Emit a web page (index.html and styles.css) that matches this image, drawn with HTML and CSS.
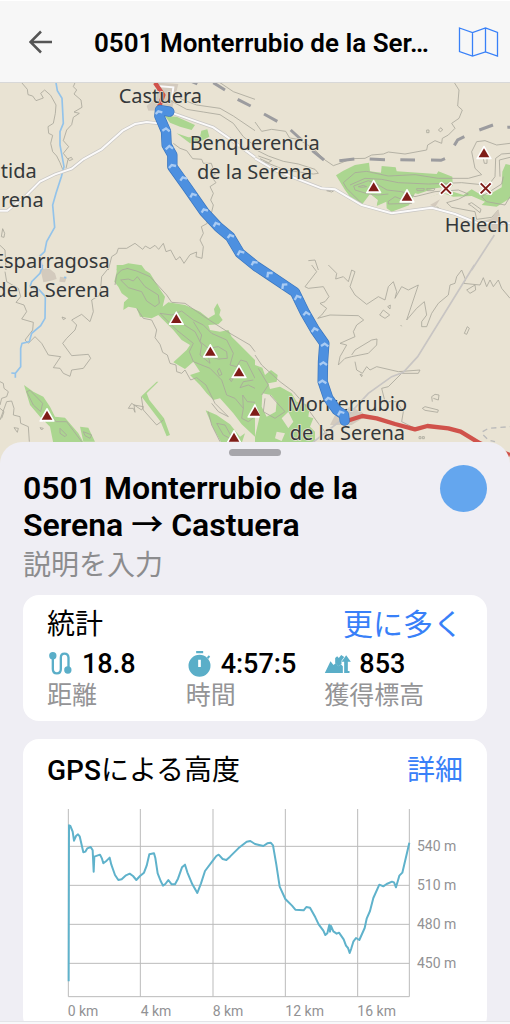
FILE: index.html
```html
<!DOCTYPE html>
<html lang="ja">
<head>
    <meta charset="UTF-8">
    <meta name="viewport" content="width=device-width, initial-scale=1">
    <title>0501 Monterrubio de la Serena → Castuera</title>
    <link rel="stylesheet" href="styles.css">
</head>
<body>

<header class="header">
    <button class="icon-btn" type="button" aria-label="戻る">
        <svg class="back-icon" viewBox="0 0 24 24"><path d="M23 12H2M12 1.500L1.500 12L12 22.500"/></svg>
    </button>
    <h1 class="header-title">0501 Monterrubio de la Ser…</h1>
    <button class="icon-btn" type="button" aria-label="地図">
        <svg class="map-icon" viewBox="0 0 40 30"><path d="M1 1L14 5.500L27 1L39 5.500V29L27 25L14 29L1 24.500ZM14 5.500V29M27 1V25"/></svg>
    </button>
</header>

<svg class="map" viewBox="0 249 1530 1140" preserveAspectRatio="xMidYMin slice" role="img" aria-label="ルート地図">
    <defs>
        <g id="peak"><path d="M0 -19L21 18H-21Z" fill="#fff" stroke="#fff" stroke-width="4" stroke-linejoin="round"/><path d="M0 -13L16 14H-16Z" fill="#7f1d18"/></g>
        <g id="pass"><path d="M-14 -14L14 14M14 -14L-14 14" stroke="#fff" stroke-width="13" stroke-linecap="round"/><path d="M-15 -15L15 15M15 -15L-15 15" stroke="#7f1d18" stroke-width="6"/></g>
    </defs>

    <!-- north west -->
    <g transform="translate(0 240)">
        <path class="town" d="M470 8L535 12L515 90L445 92L440 78L470 50Z"/>
        <path class="wood" d="M495 108L530 110L585 135L575 150L540 140L510 128ZM530 160L565 172L600 170L604 152L622 148L628 170L600 185L570 190ZM350 570L352 560L385 550L425 556L435 570Z"/>
        <path class="contour" d="M65 8L82 28L84 44L98 48L108 62L130 54L122 40L134 30L152 46L168 75L166 100L160 130L144 140L146 160L158 166L152 190L158 215L170 228L180 248L188 268M225 8L220 20L230 30L222 42L243 60L246 82L222 96L238 100L220 112L215 134L200 150L190 182L206 200L190 220L204 238L198 265M204 236L214 232L218 238L208 242ZM520 36L545 58L590 75L660 85L700 108L765 152M512 62L560 88L610 96L660 104L700 130L730 170L765 198M520 190L540 205L560 212L578 236L605 238L610 250L634 250L638 262L630 270L650 280L634 290L648 308L630 320L640 340L632 360L640 375L634 400L618 410L622 430L604 440L610 460L600 480L610 500L606 535L588 530L590 516L570 524L552 550L540 530L528 540L512 510L498 515L490 490L476 508L465 496L450 506L436 498L428 508L405 490L380 505L355 505L350 520L335 530L325 570M660 8L700 35L765 58M8 446L4 470L12 472L14 460L8 446M0 496L15 510L18 570"/>
        <path class="river" d="M168 8L172 32L186 55L190 130L180 155L180 195L192 260L184 290L168 340L158 375L164 442L140 485L134 515L120 528L128 570"/>
        <path class="road-edge" d="M0 392L22 392L80 345L120 305L165 283L215 266L250 238L305 208L368 152L405 132L440 126L475 130M520 100L590 125L640 142L680 170L765 232"/>
        <path class="road" d="M0 392L22 392L80 345L120 305L165 283L215 266L250 238L305 208L368 152L405 132L440 126L475 130M520 100L590 125L640 142L680 170L765 232M470 18L520 22L515 60"/>
        <path class="rail" d="M565 0L592 12M640 8L675 30M713 58L752 78"/>
        <path class="red-road" d="M465 8L490 45L474 90"/>
    </g>

    <!-- north east -->
    <g transform="translate(765 240)">
        <path class="wood" d="M243 286L265 272L300 255L342 248L345 274L378 278L380 258L422 262L425 274L545 282L550 274L592 290L594 335L625 345L650 328L670 340L700 345L740 322L742 275L752 252L765 255V355L725 380L680 375L690 365L650 348L595 350L560 338L525 350L480 340L462 376L410 395L395 385L394 365L365 378L368 360L345 342L320 375L285 350L270 330Z"/>
        <path class="ground" d="M330 372L345 342L368 360L362 384L376 374L388 384L372 392ZM480 345L540 325L594 318V345L560 338L525 352ZM600 320L660 312L735 290L730 322L700 340L650 325Z"/>
        <path class="contour" d="M0 126L20 154L50 148L92 154L104 174L130 178L175 205L210 240L235 257L255 250L290 236L330 235L350 225L385 222L400 216L450 222L515 210L518 195L540 182L560 190L562 175L580 165L600 145L590 130L612 115L622 90L608 78L612 30L598 8M515 150L522 150L522 158L515 158ZM550 150L558 143L563 150L556 155ZM0 208L40 228L85 244L130 252L180 268L190 280L175 282L90 270L40 250L0 238M10 228L50 242L40 248L15 236M265 308L300 278L335 274L400 288L480 284L550 295L640 295L680 284L660 265L650 215L665 185L690 182L725 195L765 190M285 315L330 295L380 298L430 308L520 312L620 308L700 316L720 290L722 235L740 222L765 220M296 318L340 302L362 310L396 330L440 335L480 350L540 335L610 330L640 342L610 358L575 368L590 382L660 395L665 418L710 412L730 390M296 318L300 330L340 342L370 345L400 342M265 308L275 325L320 370M400 364L420 350L470 370L400 372ZM310 320L325 316L335 320L320 322ZM485 326L508 326L506 332L486 332ZM515 326L540 326L536 332L517 332ZM684 232L688 250L696 250L696 234M640 372L650 368L678 388L675 398L650 378ZM745 290L740 312L680 350L695 365L750 375L765 350M560 390L545 380M215 332L240 330L230 336ZM160 542L180 540L190 570M735 290L733 240L765 232"/>
        <path class="town" d="M665 430L710 415L730 388L740 428L735 452L665 448ZM525 375L555 358L540 382Z"/>
        <path class="road-edge" d="M0 235L60 270L130 298L200 325L240 328L320 375L410 400L480 390L530 383L600 402L665 428L765 430"/>
        <path class="road" d="M0 235L60 270L130 298L200 325L240 328L320 375L410 400L480 390L530 383L600 402L665 428L765 430"/>
        <path class="lane" d="M718 465L650 570"/>
        <path class="rail" d="M27 102L67 124M107 150L140 180M172 212L207 240M253 242L298 237M344 237L390 239M436 239L480 240M528 240L558 241L570 236M598 196L608 180L628 170M673 150L714 135M757 142L790 140"/>
        <use href="#peak" x="356" y="320"/><use href="#peak" x="456" y="348"/><use href="#peak" x="687" y="218"/>
        <use href="#pass" x="573" y="326"/><use href="#pass" x="692" y="325"/>
    </g>

    <!-- south west -->
    <g transform="translate(0 795)">
        <path class="town" d="M122 15L145 8L165 25L170 42L150 48L130 52ZM180 35L200 38L195 52L178 50Z"/>
        <path class="wood" d="M350 0L410 0L450 25L478 70L495 95L488 125L505 112L555 120L600 140L625 160L645 148L642 132L652 115L662 135L658 150L668 165L655 178L625 180L630 195L660 200L685 195L695 215L720 240L765 285V515L725 478L700 445L660 400L640 405L620 385L600 360L570 330L600 320L580 290L555 312L520 292L560 255L570 240L545 225L520 195L490 165L475 150L455 160L420 155L410 130L385 125L370 135L372 112L385 100L365 85L355 65L343 50L350 20ZM72 360L100 380L130 395L150 425L165 455L195 458L235 505L252 535H160L150 485L120 455L90 420ZM240 485L265 488L285 530H250ZM475 350L440 385L448 405L492 460L510 510L500 514L482 470L424 394L470 350ZM617 436L650 450L690 478L720 515L735 505L725 535H665L640 490Z"/>
        <path class="contour" d="M380 10L410 18L450 35L500 90L515 112L555 115L620 160L690 205L750 240L765 260M345 60L350 30L365 15L385 10M362 45L385 42L400 48L412 35L435 65L475 90L478 115L465 125L440 108L425 80L385 68ZM410 130L430 160L455 165L470 195L465 218L480 238L488 262L502 270L510 295L528 300L530 320L545 325L555 315L572 345L590 338L618 360L645 415L685 455L655 440L635 415M480 145L515 150L545 138L580 165L610 180L635 205L680 225L700 265L690 300L710 305L722 285L740 290L765 340M480 145L530 195L580 235L568 260L580 290L630 310L665 345L680 390L705 400L730 430L725 460L745 470L765 455M580 170L605 210L600 230L625 250L655 245L680 260L682 280L655 282L625 275L630 295L600 270L605 240L585 200L530 165M652 318L658 310L666 328L658 332ZM688 342L700 340L694 350ZM760 345L730 350L720 368L745 360L765 370M765 412L742 410L728 390L730 430M15 20L20 50L55 70L62 95L48 112L72 120L80 140L65 162L100 172L98 195L75 225L85 235L105 215L125 235L145 270L182 275L160 308L180 310L190 325L210 334L215 315L250 310L272 280L265 268L215 272L188 235L200 220L225 195L230 180L215 165L245 148L270 170L280 140L275 105L300 90L305 35L325 10M186 156L197 160L190 164ZM80 380L90 376L128 415L122 440L100 420ZM130 470L145 455L170 470L200 470L245 530M120 488L130 490L125 495ZM0 350L10 355L12 370L25 380L20 395L5 400L0 420M0 465L20 410L35 408L42 430L40 450L60 455L62 475L85 485L88 530M42 488L55 490L52 502ZM0 430L12 440L5 460M180 490L200 510L195 515L180 505ZM250 500L275 510L270 520L255 512ZM385 430L395 415L425 435L430 425L402 420L405 442L400 430ZM424 395L430 435L470 480L490 465M625 440L635 480L660 530M650 475L675 480L700 525L670 510Z"/>
        <path class="river" d="M128 0L120 25L95 50L90 65M90 65L118 75L136 95L135 160L122 182L95 205L88 230L66 235L62 250V305L46 325L34 324M46 325V338M192 37L199 38"/>
        <use href="#peak" x="529" y="160"/><use href="#peak" x="631" y="258"/><use href="#peak" x="717" y="320"/><use href="#peak" x="765" y="438"/><use href="#peak" x="141" y="450"/><use href="#peak" x="702" y="516"/>
    </g>

    <!-- south east -->
    <g transform="translate(765 795)">
        <path class="wood" d="M0 300L22 308L30 330L48 315L68 330L65 350L40 355L45 372L75 365L110 385L125 410L165 420L160 455L175 460L165 485L180 500V540H0V515L15 450L0 415Z"/>
        <path class="ground" d="M22 385L48 390L65 410L62 440L35 455L20 425ZM80 460L100 440L115 470L100 490ZM65 500L90 505L80 528L60 520Z"/>
        <path class="town" d="M225 480L240 450L285 425L320 440L330 455L290 480Z"/>
        <path class="contour" d="M0 270L20 300L75 350L115 380L150 420L190 475L225 520M10 310L40 360L20 390M45 390L90 440L60 460L25 440L30 400M170 0L185 20L150 65L160 70L205 65L222 95L210 110L195 115L215 130L200 150L188 160L225 150L310 152L326 165L305 180L295 200L300 215L255 235L275 240L255 275L250 300L270 280L290 275L340 265L365 240L366 222L350 225L300 255L290 270M220 0L245 25L242 42L265 35L280 50L290 15L300 20L285 65L300 90L335 118L370 95L390 105L400 65L415 50L425 80L420 100L440 65L460 75L490 60L455 165L485 130L508 110L515 150L500 170L500 185L515 185L530 145L550 115L580 90L585 60L600 55L605 35L620 15L632 45L625 55L675 60L685 38L695 65L705 45L715 65L730 45L740 70L765 100M374 150L385 135L404 150L390 160ZM398 125L406 120L405 132ZM635 75L660 60L662 75L645 85ZM628 205L637 185L643 190L635 208ZM300 290L305 315L322 325L335 305L345 315L365 305L430 320L495 315L490 325L440 325L400 365L380 370L390 410L425 410L445 440L440 470L490 495M315 328L322 330L320 335ZM532 410L530 395L540 388L552 390L550 405L535 400M502 430L510 425L550 435L548 442L510 436ZM492 515L498 515L498 521L492 521ZM502 515L508 515L508 521L502 521ZM437 180L440 184"/>
        <path class="lane" d="M658 0L488 275L445 322L410 335L340 385L285 445L240 480L170 535"/>
        <path class="track" d="M683 500L700 490L765 485M685 510L700 525L720 530"/>
        <path class="red-road" d="M275 468L322 453L365 460L420 477L480 493L517 483L580 490L617 500L675 535L765 570"/>
    </g>

    <g class="labels">
        <text x="356" y="309">Castuera</text>
        <text x="764" y="449" text-anchor="middle">Benquerencia</text>
        <text x="764" y="536" text-anchor="middle">de la Serena</text>
        <text x="110" y="533" text-anchor="end">tida</text>
        <text x="131" y="622" text-anchor="end">rena</text>
        <text x="329" y="804" text-anchor="end">Esparragosa</text>
        <text x="329" y="891" text-anchor="end">de la Serena</text>
        <text x="1334" y="696">Helech</text>
        <text x="1042" y="1232" text-anchor="middle">Monterrubio</text>
        <text x="1042" y="1320" text-anchor="middle">de la Serena</text>
    </g>

    <path class="route-edge" d="M508 335L480 330L478 348L498 394L500 435L517 465L517 500L560 560L613 636L655 681L690 710L720 760L770 800L805 823L885 877L915 938L945 990L973 1030L969 1085L968 1145L985 1195L1010 1230L1032 1245L1034 1262"/>
    <path class="route" d="M508 335L480 330L478 348L498 394L500 435L517 465L517 500L560 560L613 636L655 681L690 710L720 760L770 800L805 823L885 877L915 938L945 990L973 1030L969 1085L968 1145L985 1195L1010 1230L1032 1245L1034 1262"/>
    <path class="arrows" d="M467 342L475 334L487 337M487 392L498 385L509 394M497 448L508 438L519 446M507 504L515 495L528 498M541 542L548 532L561 536M571 592L577 582L590 586M605 638L611 628L624 632M641 680L647 669L660 674M683 714L690 705L702 710M713 766L719 754L733 758M755 796L760 786L773 788M802 832L804 819L818 819M847 867L849 854L862 853M884 900L891 888L904 893M910 946L918 937L930 944M935 996L943 985L955 991M963 1038L974 1031L985 1039M959 1094L970 1087L981 1095M956 1149L967 1142L979 1150M976 1202L984 1194L996 1199M1014 1246L1020 1235L1033 1239"/>
</svg>

<main class="sheet">
    <div class="handle"></div>
    <div class="intro">
        <h2 class="title">0501 Monterrubio de la Serena <span class="arrow">→</span> Castuera</h2>
        <button class="color-btn" type="button" aria-label="色"></button>
    </div>
    <input class="desc" type="text" placeholder="説明を入力" aria-label="説明">

    <section class="card">
        <div class="card-head">
            <h3><span class="ja">統計</span></h3>
            <button class="link-btn more" type="button">更に多く</button>
        </div>
        <div class="stats">
            <div class="stat">
                <div class="value">
                    <svg class="stat-icon" viewBox="0 0 72 78"><path d="M13 18V54Q13 67 25 67T37 54V20Q37 8 48 8T60 20V56" fill="none" stroke="#5aaec8" stroke-width="7"/><circle cx="13" cy="14" r="11"/><circle cx="58" cy="57" r="11"/></svg>
                    <span>18.8</span>
                </div>
                <div class="name">距離</div>
            </div>
            <div class="stat">
                <div class="value">
                    <svg class="stat-icon" viewBox="0 0 72 78"><path d="M26 0H47V7H26ZM58 19L64 13L68 17L62 24Z"/><path fill-rule="evenodd" d="M36 11A33 33 0 1 0 36 77A33 33 0 1 0 36 11ZM32 26H40V48H32Z"/></svg>
                    <span>4:57:5</span>
                </div>
                <div class="name">時間</div>
            </div>
            <div class="stat">
                <div class="value">
                    <svg class="stat-icon" viewBox="0 0 80 78"><path d="M2 66L19 31L28 42L35 36L43 46L50 40L56 46V66Z"/><path d="M33 35V21L39 16L44 21L51 12L60 18L52 29V39L43 46Z"/><path d="M60 66V32H52L66 13L80 32H71V60H76V66Z"/></svg>
                    <span>853</span>
                </div>
                <div class="name">獲得標高</div>
            </div>
        </div>
    </section>

    <section class="card chart-card">
        <div class="card-head">
            <h3>GPS<span class="ja">による高度</span></h3>
            <button class="link-btn" type="button">詳細</button>
        </div>
        <svg class="chart" viewBox="141 216 1248 660" role="img" aria-label="GPSによる高度">
            <path class="grid" d="M205 237V800M421 237V800M639 237V800M856 237V800M1073 237V800M1228 237V800M205 349H1228M205 466H1228M205 583H1228M205 700H1228M205 800H1228"/>
            <path class="line" d="M206 754L207 286L211 288L218 305L222 332L228 318L234 313L239 319L245 345L250 367L256 365L262 355L272 351L278 361L281 425L283 380L300 374L306 386L310 400L320 392L329 383L334 404L345 435L355 450L365 448L378 436L389 431L399 438L409 450L420 438L432 428L440 407L448 373L462 370L466 384L473 430L482 453L489 467L496 462L505 450L515 463L525 463L534 446L546 412L555 404L562 427L577 463L592 489L603 460L615 423L639 391L649 378L656 374L668 387L679 390L690 380L715 355L740 335L751 333L765 342L790 348L802 340L812 338L819 346L829 404L839 470L856 507L876 527L886 539L911 541L919 531L930 533L946 562L956 583L970 602L976 615L982 610L988 584L990 605L993 588L1000 604L1010 611L1017 608L1031 628L1038 647L1044 654L1049 669L1054 655L1060 635L1068 624L1078 630L1094 594L1100 566L1110 543L1120 504L1138 464L1150 469L1160 462L1176 455L1182 457L1188 472L1198 437L1207 428L1213 403L1223 360L1228 338"/>
            <g class="axis">
                <text x="1251" y="362">540 m</text>
                <text x="1251" y="479">510 m</text>
                <text x="1251" y="597">480 m</text>
                <text x="1251" y="713">450 m</text>
                <text x="203" y="859">0 km</text>
                <text x="422" y="859">4 km</text>
                <text x="638" y="859">8 km</text>
                <text x="856" y="859">12 km</text>
                <text x="1072" y="859">16 km</text>
            </g>
        </svg>
    </section>
</main>

<footer class="bottom-edge"></footer>

</body>
</html>
```
FILE: styles.css
```css
*{
    box-sizing: border-box;
}
html,body{
    height: 100%;
}
body{
    margin: 0;
    display: flex;
    flex-direction: column;
    overflow: hidden;
    background: #efeef4;
    color: #000;
    font-family: Roboto, "Noto Sans CJK JP", sans-serif;
}
h1,h2,h3{
    margin: 0;
}
button{
    padding: 0;
    border: 0;
    background: none;
    font-family: inherit;
    cursor: pointer;
}
svg{
    display: block;
}

.header{
    flex: none;
    height: 83px;
    padding: 0 11px 0 29px;
    display: flex;
    align-items: center;
    background: #f7f7f7;
    border-top: 1px solid #fff;
    border-bottom: 1px solid #d8d8d8;
}
.header-title{
    flex: 1;
    min-width: 0;
    margin: 3px 20px 0 41px;
    font-size: 27px;
    line-height: 36px;
    font-weight: 600;
    white-space: nowrap;
    overflow: hidden;
    text-overflow: ellipsis;
}
.back-icon{
    width: 24px;
    height: 24px;
    fill: none;
    stroke: #555;
    stroke-width: 2.5;
}
.map-icon{
    width: 41px;
    height: 30px;
    fill: none;
    stroke: #3880f8;
    stroke-width: 1.3;
}
@media (max-width: 520px){
    .header-title{
        font-size: 26px;
    }
}

/* map */
.map{
    flex: none;
    width: 100%;
    height: 380px;
    background: #e9e3d3;
}
.wood{
    fill: #abd690;
}
.ground{
    fill: #e9e3d3;
}
.town{
    fill: #d3cabd;
}
.contour{
    fill: none;
    stroke: #aaa79b;
    stroke-width: 2.5;
    stroke-linejoin: round;
}
.river{
    fill: none;
    stroke: #93c3ea;
    stroke-width: 5;
}
.road-edge{
    fill: none;
    stroke: #c9c7c4;
    stroke-width: 10;
}
.road{
    fill: none;
    stroke: #fbfafa;
    stroke-width: 6;
}
.lane{
    fill: none;
    stroke: #c8c5c3;
    stroke-width: 5;
}
.track{
    fill: none;
    stroke: #bbb;
    stroke-width: 4;
    stroke-dasharray: 16 12;
}
.rail{
    fill: none;
    stroke: #9c9c9f;
    stroke-width: 9;
}
.red-road{
    fill: none;
    stroke: #d0524b;
    stroke-width: 13;
    stroke-linejoin: round;
}
.labels{
    fill: #34383a;
    stroke: #e9e3d3;
    stroke-width: 4;
    paint-order: stroke;
    font-family: "Noto Sans", sans-serif;
    font-size: 60px;
}
.route-edge,.route{
    fill: none;
    stroke: #3a75bd;
    stroke-width: 31;
    stroke-linecap: round;
    stroke-linejoin: round;
}
.route{
    stroke: #4d90e0;
    stroke-width: 27;
}
.arrows{
    fill: none;
    stroke: #a9cbf3;
    stroke-width: 7;
}

/* bottom sheet */
.sheet{
    flex: 1;
    min-height: 0;
    margin-top: -21px;
    padding: 7px 23px 0;
    overflow: hidden;
    background: #efeef4;
    border-radius: 22px 22px 0 0;
    z-index: 1;
}
.handle{
    width: 52px;
    height: 7px;
    margin: 0 auto;
    border-radius: 4px;
    background: #a7a6ab;
}
.intro{
    display: flex;
    justify-content: space-between;
    align-items: flex-start;
    padding-top: 9px;
}
.title{
    max-width: 360px;
    margin-top: 5px;
    font-size: 32px;
    line-height: 37px;
    font-weight: 600;
}
.arrow{
    font-weight: 500;
}
.color-btn{
    flex: none;
    width: 47px;
    height: 47px;
    border-radius: 50%;
    background: #64a6ee;
}
.desc{
    display: block;
    width: 100%;
    height: 40px;
    padding: 3px 0 0;
    border: 0;
    background: none;
    font-family: inherit;
    font-size: 28px;
}
.desc::placeholder{
    color: #8c8c8e;
    opacity: 1;
}

.card{
    margin-top: 11px;
    padding: 10px 24px;
    background: #fff;
    border-radius: 16px;
}
.card-head{
    display: flex;
    justify-content: space-between;
    align-items: center;
    height: 40px;
}
.card-head h3{
    font-size: 28px;
    line-height: 40px;
    font-weight: 500;
}
.card-head .ja{
    font-weight: 400;
}
.link-btn{
    color: #3880f8;
    font-size: 28px;
    line-height: 40px;
}
.more{
    font-size: 30px;
}
.stats{
    display: grid;
    grid-template-columns: repeat(3, 1fr);
}
.value{
    display: flex;
    align-items: center;
    gap: 8px;
    height: 36px;
    padding-top: 2px;
    font-size: 27px;
    font-weight: 500;
    white-space: nowrap;
}
.stat-icon{
    width: 27px;
    height: 26px;
    fill: #5aaec8;
}
.name{
    color: #949496;
    font-size: 25px;
    line-height: 30px;
}

.chart-card{
    margin-top: 18px;
    padding-top: 12px;
}
.chart{
    width: 100%;
    margin-top: 11px;
}
.grid{
    fill: none;
    stroke: #bbb;
    stroke-width: 3;
}
.line{
    fill: none;
    stroke: #5fb2cb;
    stroke-width: 6;
    stroke-linejoin: round;
}
.axis{
    fill: #929294;
    font-size: 42px;
}

.bottom-edge{
    flex: none;
    height: 3px;
    background: #f8f8fa;
    border-top: 1px solid #e4e4e8;
}
```
